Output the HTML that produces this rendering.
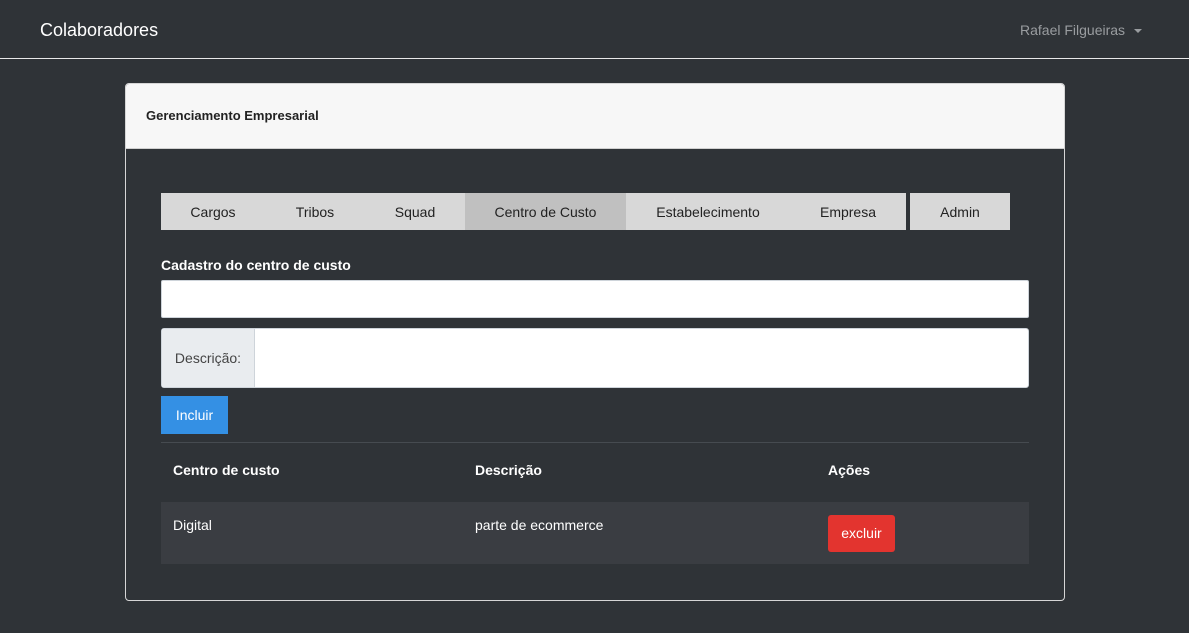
<!DOCTYPE html>
<html><head><meta charset="utf-8"><style>
*{box-sizing:border-box;margin:0;padding:0}
body{width:1189px;height:633px;background:#2f3337;font-family:"Liberation Sans",Arial,sans-serif;position:relative;overflow:hidden;color:#fff}
.a{position:absolute}
</style></head><body>
<div class="a" style="left:40px;top:20px;font-size:18px;color:#fff">Colaboradores</div>
<div class="a" style="left:1020px;top:22px;font-size:14px;color:#9a9da0">Rafael Filgueiras <span style="display:inline-block;margin-left:5px;border-left:4px solid transparent;border-right:4px solid transparent;border-top:4px solid #9a9da0;vertical-align:middle"></span></div>
<div class="a" style="left:0;top:58px;width:1189px;height:1px;background:#e8e8e8"></div>

<div class="a" style="left:125px;top:83px;width:940px;height:518px;border:1px solid #d6d6d6;border-radius:4px;"></div>
<div class="a" style="left:126px;top:84px;width:938px;height:65px;background:#f7f7f7;border-bottom:1px solid #d0d0d0;border-radius:3px 3px 0 0"></div>
<div class="a" style="left:146px;top:108px;font-size:13px;font-weight:bold;color:#222">Gerenciamento Empresarial</div>

<div class="a" style="left:161px;top:193px;height:37px;width:745px;background:#d8d8d8;display:flex;font-size:14px;color:#222;line-height:39px">
<div style="width:104px;text-align:center">Cargos</div>
<div style="width:100px;text-align:center">Tribos</div>
<div style="width:100px;text-align:center">Squad</div>
<div style="width:161px;text-align:center;background:#c0c0c0">Centro de Custo</div>
<div style="width:164px;text-align:center">Estabelecimento</div>
<div style="width:116px;text-align:center">Empresa</div>
</div>
<div class="a" style="left:910px;top:193px;height:37px;width:100px;background:#d8d8d8;font-size:14px;color:#222;line-height:39px;text-align:center">Admin</div>

<div class="a" style="left:161px;top:257px;font-size:14px;font-weight:bold">Cadastro do centro de custo</div>
<div class="a" style="left:161px;top:280px;width:868px;height:38px;background:#fff;border:1px solid #ced4da;border-radius:2px"></div>
<div class="a" style="left:161px;top:328px;width:868px;height:60px;background:#fff;border:1px solid #ced4da;border-radius:3px"></div>
<div class="a" style="left:162px;top:329px;width:93px;height:58px;background:#e9ecef;border-right:1px solid #ced4da;color:#444;font-size:14px;line-height:58px;text-align:center">Descrição:</div>
<div class="a" style="left:161px;top:396px;width:67px;height:38px;background:#3490e4;color:#fff;font-size:14px;line-height:38px;text-align:center">Incluir</div>
<div class="a" style="left:161px;top:442px;width:868px;height:1px;background:#464b50"></div>

<div class="a" style="left:173px;top:462px;font-size:14px;font-weight:bold">Centro de custo</div>
<div class="a" style="left:475px;top:462px;font-size:14px;font-weight:bold">Descrição</div>
<div class="a" style="left:828px;top:462px;font-size:14px;font-weight:bold">Ações</div>
<div class="a" style="left:161px;top:502px;width:868px;height:62px;background:#3a3d42"></div>
<div class="a" style="left:173px;top:517px;font-size:14px">Digital</div>
<div class="a" style="left:475px;top:517px;font-size:14px">parte de ecommerce</div>
<div class="a" style="left:828px;top:515px;width:67px;height:37px;background:#e3342f;border-radius:3px;font-size:14px;line-height:37px;text-align:center">excluir</div>
</body></html>
